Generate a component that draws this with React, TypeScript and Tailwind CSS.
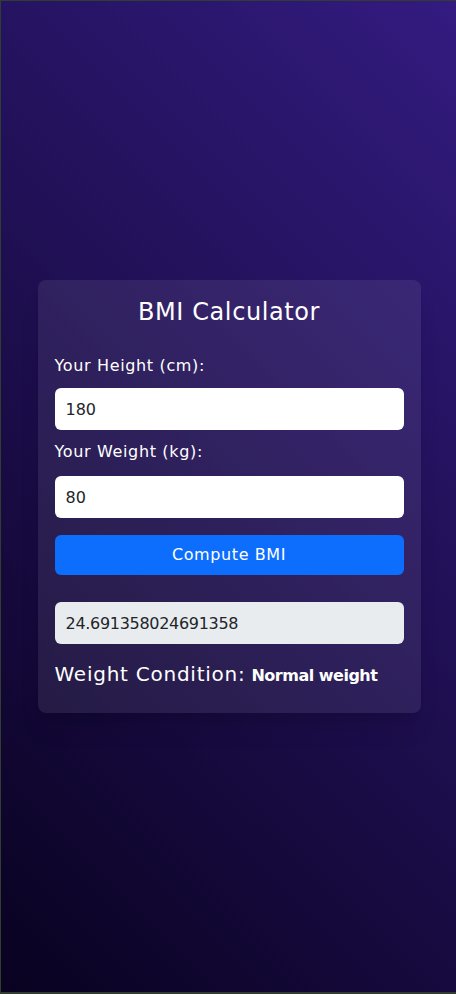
export default function App() {
  const font = { fontFamily: '"DejaVu Sans", "Open Sans", sans-serif' };

  return (
    <div
      className="flex h-[994px] w-[456px] items-center justify-center border-t border-l border-b-2 border-[#333c31] bg-[linear-gradient(45deg,#090220,#331b80)]"
      style={font}
    >
      <div className="ml-[1px] w-[383px] rounded-lg bg-white/[0.08] px-[17px] pt-[18px] pb-[24px] shadow-xl">
        <h1 className="text-center text-[24px] leading-[29px] font-medium tracking-[0.6px] text-white">
          BMI Calculator
        </h1>

        <label className="mt-[27px] block text-[16px] leading-6 tracking-[0.65px] text-white">
          Your Height (cm):
        </label>
        <input
          readOnly
          value="180"
          className="mt-[10px] block h-[42px] w-full rounded-md bg-white px-[11px] text-[16px] text-[#212529] outline-none"
        />

        <label className="mt-[10px] block text-[16px] leading-6 tracking-[0.65px] text-white">
          Your Weight (kg):
        </label>
        <input
          readOnly
          value="80"
          className="mt-[12px] block h-[42px] w-full rounded-md bg-white px-[11px] text-[16px] text-[#212529] outline-none"
        />

        <button className="mt-[17px] block h-[40px] w-full rounded-md bg-[#0d6efd] text-[16px] tracking-[0.6px] text-white">
          Compute BMI
        </button>

        <input
          readOnly
          value="24.691358024691358"
          className="mt-[27px] block h-[42px] w-full rounded-md bg-[#e9ecef] px-[11px] text-[16px] tracking-[-0.3px] text-[#212529] outline-none"
        />

        <div className="mt-[15px] flex items-baseline gap-[6px] text-white">
          <span className="text-[20px] leading-[30px] font-medium tracking-[0.75px]">Weight Condition:</span>
          <span className="text-[16px] font-semibold tracking-[-0.5px]">Normal weight</span>
        </div>
      </div>
    </div>
  );
}
